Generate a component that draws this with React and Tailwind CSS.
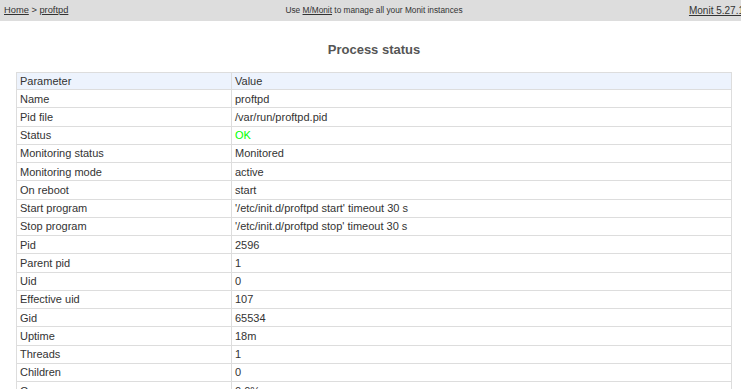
import React from "react";

const rows = [
  ["Name", "proftpd"],
  ["Pid file", "/var/run/proftpd.pid"],
  ["Status", "OK", true],
  ["Monitoring status", "Monitored"],
  ["Monitoring mode", "active"],
  ["On reboot", "start"],
  ["Start program", "'/etc/init.d/proftpd start' timeout 30 s"],
  ["Stop program", "'/etc/init.d/proftpd stop' timeout 30 s"],
  ["Pid", "2596"],
  ["Parent pid", "1"],
  ["Uid", "0"],
  ["Effective uid", "107"],
  ["Gid", "65534"],
  ["Uptime", "18m"],
  ["Threads", "1"],
  ["Children", "0"],
  ["Cpu", "0.0%"],
  ["Cpu total", "0.0%"],
  ["Memory", "0.1% [2.0 MB]"],
];

export default function App() {
  return (
    <div className="w-[741px] h-[389px] overflow-hidden bg-white" style={{ fontFamily: '"Liberation Sans", Arial, sans-serif' }}>
      <div className="w-[748px]">
        <div className="relative h-[21px] bg-[#dddddd] flex items-center justify-between pl-[4px] pr-[4px] text-[9.3px] text-[#333]">
          <div>
            <a className="underline text-[#333]">Home</a> &gt; <a className="underline text-[#333]">proftpd</a>
          </div>
          <div className="absolute left-0 right-0 text-center text-[8.3px] pointer-events-none">
            Use <a className="underline text-[#333]">M/Monit</a> to manage all your Monit instances
          </div>
          <div className="text-[10px]">
            <a className="underline text-[#333]">Monit 5.27.1</a>
          </div>
        </div>
        <h1 className="text-center font-bold text-[13px] text-[#555] mt-[21px] mb-[15px] leading-[15px]">Process status</h1>
        <div className="px-[16px]">
          <table className="w-[716px] border-collapse text-[11px] text-[#333]">
            <thead>
              <tr className="bg-[#edf3fd] h-[17px]">
                <td className="w-[215px] border border-[#dddddd] pl-[3px] leading-[12px]">Parameter</td>
                <td className="border border-[#dddddd] pl-[3px] leading-[12px]">Value</td>
              </tr>
            </thead>
            <tbody>
              {rows.map(([k, v, ok]) => (
                <tr key={k} className="h-[18.25px]">
                  <td className="border border-[#dddddd] pl-[3px] leading-[12px]">{k}</td>
                  <td className={"border border-[#dddddd] pl-[3px] leading-[12px] " + (ok ? "text-[#00ff00]" : "")}>{v}</td>
                </tr>
              ))}
            </tbody>
          </table>
        </div>
      </div>
    </div>
  );
}
